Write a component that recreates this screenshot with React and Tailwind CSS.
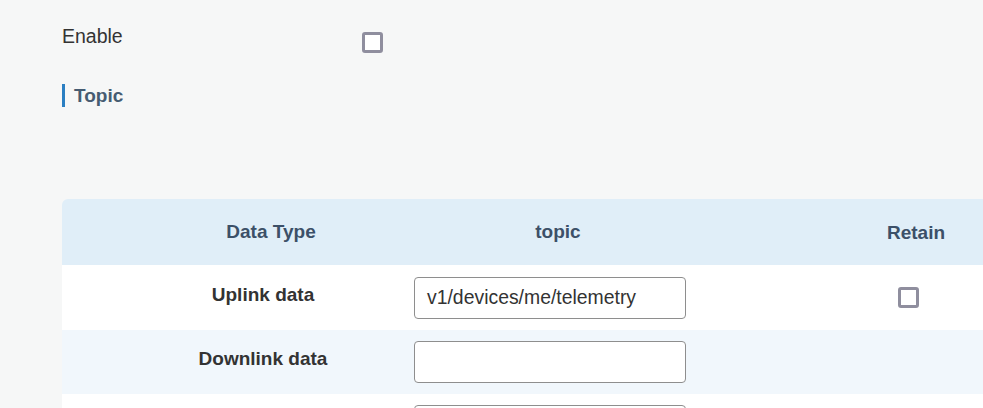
import React from "react";

function Box() {
  return (
    <span className="block w-[21px] h-[21px] rounded-[3px] border-[3px] border-[#8f8e9e] bg-white box-border" />
  );
}

export default function App() {
  const font = { fontFamily: '"Liberation Sans", Arial, sans-serif' };
  return (
    <div
      className="w-[983px] h-[408px] overflow-hidden bg-[#f6f7f7] text-[19px] text-[#333]"
      style={font}
    >
      <div className="pl-[62px] pt-[24px]">
        <div className="flex items-start h-[36px]">
          <div className="w-[300px] leading-[24px] text-[19.5px]">Enable</div>
          <div className="pt-[8px]">
            <Box />
          </div>
        </div>
        <div className="mt-[24px] flex items-center h-[23px]">
          <span className="w-[3px] h-[23px] bg-[#2b7fc2]" />
          <span className="ml-[9px] font-bold text-[#465c72] leading-[23px]">
            Topic
          </span>
        </div>
        <div className="mt-[92px] w-[1068px] rounded-tl-[6px] overflow-hidden">
          <div className="grid grid-cols-[352px_288px_428px] h-[66px] bg-[#e0eef8] font-bold text-[#3c5068] items-center">
            <div className="text-center pl-[66px]">Data Type</div>
            <div className="text-center">topic</div>
            <div className="text-center pt-[2px]">Retain</div>
          </div>
          <div className="grid grid-cols-[352px_288px_428px] h-[65px] bg-white items-center">
            <div className="text-center pl-[50px] pb-[5px] font-bold">Uplink data</div>
            <div>
              <div className="w-[272px] h-[42px] border border-[#8e8e8e] rounded-[4px] bg-white pl-[12px] flex items-center text-[19.4px]">
                v1/devices/me/telemetry
              </div>
            </div>
            <div className="flex justify-center pr-[16px]">
              <Box />
            </div>
          </div>
          <div className="grid grid-cols-[352px_288px_428px] h-[64px] bg-[#f1f7fc] items-center">
            <div className="text-center pl-[50px] pb-[5px] font-bold">Downlink data</div>
            <div>
              <div className="w-[272px] h-[42px] border border-[#8e8e8e] rounded-[4px] bg-white" />
            </div>
            <div />
          </div>
          <div className="grid grid-cols-[352px_288px_428px] h-[64px] bg-white items-start">
            <div />
            <div className="pt-[11px]">
              <div className="w-[272px] h-[42px] border border-[#8e8e8e] rounded-[4px] bg-white" />
            </div>
            <div />
          </div>
        </div>
      </div>
    </div>
  );
}
